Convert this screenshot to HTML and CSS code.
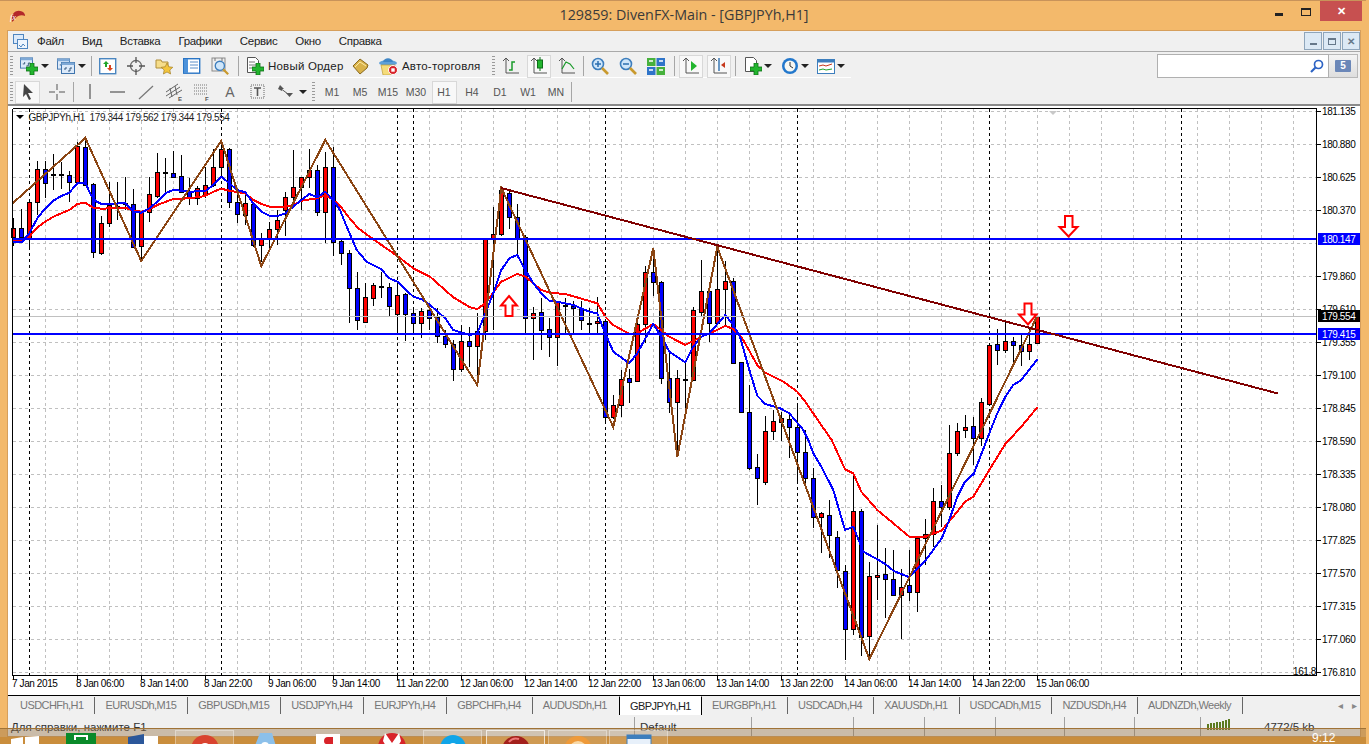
FILE: index.html
```html
<!DOCTYPE html>
<html lang="ru">
<head>
<meta charset="utf-8">
<title>129859: DivenFX-Main - [GBPJPYh,H1]</title>
<link rel="stylesheet" href="styles.css">
</head>
<body>
<svg class="defs" width="0" height="0">
  <symbol id="plus" viewBox="0 0 12 12"><path d="M4 0h4v4h4v4H8v4H4V8H0V4h4z" fill="#22b52e" stroke="#0d6f18" stroke-width=".8"/></symbol>
  <symbol id="win" viewBox="0 0 14 12"><rect x=".5" y=".5" width="13" height="11" fill="#dceafa" stroke="#3f74ad"/><rect x=".5" y=".5" width="13" height="2.5" fill="#7fa9d6"/><path d="M3 7h2V5M7 9h2V6h2" fill="none" stroke="#34567a"/></symbol>
  <symbol id="mag" viewBox="0 0 18 18"><circle cx="7" cy="7" r="5.5" fill="#cfe6fa" stroke="#3d7ebd" stroke-width="1.6"/><path d="M11 11l6 6" stroke="#c99a2e" stroke-width="2.6"/></symbol>
</svg>
<div class="app">
  <header class="titlebar">
    <svg class="logo" viewBox="0 0 18 14"><path d="M3 9C3 3 9 0 13 2c3 1 4 3 4 5-4-2-8 0-10 2-1 2-3 4-4 4z" fill="#b3282a"/><text x="1" y="11" class="logo-fx">fx</text></svg>
    <h1 class="title">129859: DivenFX-Main - [GBPJPYh,H1]</h1>
    <div class="winctl">
      <span class="wc-min"></span>
      <span class="wc-max"></span>
      <span class="wc-close">✕</span>
    </div>
  </header>
  <main class="client">
    <nav class="menubar">
      <svg class="menu-ico" viewBox="0 0 15 15"><rect x=".5" y=".5" width="10" height="9" fill="#dceafa" stroke="#4f86c0"/><rect x="4.5" y="5.5" width="10" height="9" fill="#eef5fd" stroke="#4f86c0"/><path d="M6 11l2 2 2-3 2 2" fill="none" stroke="#4f86c0"/></svg>
      <div class="menu-items">
        <span>Файл</span><span>Вид</span><span>Вставка</span><span>Графики</span><span>Сервис</span><span>Окно</span><span>Справка</span>
      </div>
      <div class="mdi">
        <span class="mdi-btn"><i class="mdi-min"></i></span>
        <span class="mdi-btn"><i class="mdi-rest"></i></span>
        <span class="mdi-btn mdi-x">✕</span>
      </div>
    </nav>
    <div class="toolbar row1">
      <span class="grip"></span>
      <span class="btn"><svg class="ic" viewBox="0 0 18 18"><use href="#win" width="13" height="12" y="0"/><use href="#plus" x="6" y="6" width="12" height="12"/></svg></span>
      <span class="dd"></span>
      <span class="btn m5"><svg class="ic" viewBox="0 0 18 18"><use href="#win" width="13" height="12" y="1"/><use href="#win" x="4" y="5" width="14" height="12"/></svg></span>
      <span class="dd"></span>
      <span class="sep s-a"></span>
      <span class="btn b-a"><svg class="ic" viewBox="0 0 18 18"><rect x=".7" y="1.7" width="16" height="15" fill="#fff" stroke="#4a86c0" stroke-width="1.4"/><path d="M7 4l3 3H8v3H6V7H4z" fill="#1fa52a"/><path d="M11 14l-3-3h2V8h2v3h2z" fill="#d9431f"/></svg></span>
      <span class="btn"><svg class="ic" viewBox="0 0 18 18"><circle cx="9" cy="9" r="5.5" fill="none" stroke="#6b6b6b" stroke-width="1.3"/><path d="M9 0v6M9 12v6M0 9h6M12 9h6" stroke="#555" stroke-width="1.3"/></svg></span>
      <span class="btn"><svg class="ic" viewBox="0 0 18 18"><path d="M1 3h5l1 2h6v6H1z" fill="#f6dd8a" stroke="#b08f3a"/><path d="M12 6l1.800 3.800 4 .5-3 2.700.8 4-3.600-2-3.600 2 .8-4-3-2.700 4-.5z" fill="#f3c53c" stroke="#a4802a" stroke-width=".7"/></svg></span>
      <span class="btn"><svg class="ic" viewBox="0 0 18 18"><rect x=".7" y="1.700" width="16" height="14.500" fill="#fff" stroke="#2a75c5" stroke-width="1.400"/><rect x="1" y="2" width="4" height="14" fill="#4d92da"/><path d="M7 5h8M7 8h8M7 11h8" stroke="#5a8ec8"/></svg></span>
      <span class="btn"><svg class="ic" viewBox="0 0 18 18"><rect x="1" y="1" width="13" height="13" fill="#eee" stroke="#8a8a8a"/><path d="M4 1v3M11 1v3" stroke="#777"/><use href="#mag" x="3" y="3" width="15" height="15"/></svg></span>
      <span class="sep s-b"></span>
      <span class="btn b-b"><svg class="ic" viewBox="0 0 18 18"><path d="M1.500.5h8l3 3v12h-11z" fill="#fff" stroke="#555"/><path d="M3 5h6M3 8h7M3 11h4" stroke="#777"/><use href="#plus" x="6" y="6" width="12" height="12"/></svg></span>
      <span class="tb-label">Новый Ордер</span>
      <span class="btn b-c"><svg class="ic" viewBox="0 0 18 18"><path d="M1 9l7-7 8 6-1 3-7 6z" fill="#d9b24a" stroke="#8a6a1e"/><path d="M3 10l5-5 6 4" fill="none" stroke="#fbeaa6"/></svg></span>
      <span class="btn"><svg class="ic ic-hat" viewBox="0 0 20 18"><ellipse cx="9" cy="6" rx="9" ry="3" fill="#5ea0d8"/><path d="M4 5c1-5 9-5 10 0z" fill="#3f86c6"/><path d="M2 8h14v7l-5 3H4z" fill="#f5dc7a" stroke="#bd9c36" stroke-width=".7"/><circle cx="14" cy="13" r="4.500" fill="#d8232a" stroke="#fff"/><rect x="12.300" y="11.300" width="3.400" height="3.400" fill="#fff"/></svg></span>
      <span class="tb-label lbl2">Авто-торговля</span>
      <span class="grip g2"></span>
      <span class="btn"><svg class="ic" viewBox="0 0 18 18"><path d="M4 1v15h13" fill="none" stroke="#555"/><path d="M1 4l3-3 3 3" fill="none" stroke="#555"/><path d="M7 13h3V5h3" fill="none" stroke="#1a9a2a" stroke-width="1.500"/></svg></span>
      <span class="btn on"><svg class="ic" viewBox="0 0 18 18"><path d="M4 1v15h13" fill="none" stroke="#555"/><path d="M1 4l3-3 3 3" fill="none" stroke="#555"/><path d="M10 0v14" stroke="#0d6f18"/><rect x="7.500" y="3" width="5" height="8" fill="#22b52e" stroke="#0d6f18"/></svg></span>
      <span class="btn"><svg class="ic" viewBox="0 0 18 18"><path d="M4 1v15h13" fill="none" stroke="#555"/><path d="M1 4l3-3 3 3" fill="none" stroke="#555"/><path d="M4 12l4-7 4 2 4 5" fill="none" stroke="#1a9a2a" stroke-width="1.200"/></svg></span>
      <span class="sep s-c"></span>
      <span class="btn m0"><svg class="ic" viewBox="0 0 18 18"><use href="#mag" width="18" height="18"/><path d="M4 7h6M7 4v6" stroke="#2d6fb0" stroke-width="1.500"/></svg></span>
      <span class="btn"><svg class="ic" viewBox="0 0 18 18"><use href="#mag" width="18" height="18"/><path d="M4 7h6" stroke="#2d6fb0" stroke-width="1.500"/></svg></span>
      <span class="btn"><svg class="ic" viewBox="0 0 18 18"><rect y="1" width="8.500" height="8" fill="#47b13c"/><rect x="9.500" y="1" width="8.500" height="8" fill="#2f74c9"/><rect y="10" width="8.500" height="8" fill="#2f74c9"/><rect x="9.500" y="10" width="8.500" height="8" fill="#47b13c"/><path d="M2 4h4M12 4h4M2 13h4M12 13h4" stroke="#fff" stroke-width="1.500"/></svg></span>
      <span class="sep s-e"></span>
      <span class="btn on m0"><svg class="ic" viewBox="0 0 18 18"><path d="M4 1v15h13" fill="none" stroke="#555"/><path d="M1 4l3-3 3 3" fill="none" stroke="#555"/><path d="M9 4l6 5-6 5z" fill="#22b52e"/></svg></span>
      <span class="btn on"><svg class="ic" viewBox="0 0 18 18"><path d="M4 1v15h13" fill="none" stroke="#555"/><path d="M1 4l3-3 3 3" fill="none" stroke="#555"/><path d="M9 1v13" stroke="#2d6fb0" stroke-width="1.400"/><path d="M11 8l4-3v6z" fill="#c6391d"/></svg></span>
      <span class="sep s-d"></span>
      <span class="btn m0"><svg class="ic" viewBox="0 0 18 18"><path d="M1.500.5h8l3 3v11h-11z" fill="#fff" stroke="#555"/><use href="#plus" x="6" y="6" width="12" height="12"/></svg></span>
      <span class="dd dd-n"></span>
      <span class="btn m0"><svg class="ic" viewBox="0 0 18 18"><circle cx="9" cy="9" r="8" fill="#2277cc"/><circle cx="9" cy="9" r="5.500" fill="#f7f7f2"/><path d="M9 5v4l3 2" fill="none" stroke="#333"/></svg></span>
      <span class="dd dd-n"></span>
      <span class="btn m0"><svg class="ic" viewBox="0 0 18 18"><rect x=".5" y="2.500" width="17" height="14" fill="#fff" stroke="#3d7ebd"/><rect x=".5" y="2.500" width="17" height="3" fill="#3d7ebd"/><path d="M2 9l4-1 3 1 6-2" fill="none" stroke="#c6391d"/><path d="M2 13l4-1 3 1 6-1" fill="none" stroke="#22a52e"/></svg></span>
      <span class="dd dd-n"></span>
      <div class="search">
        <svg class="search-ico" viewBox="0 0 14 14"><circle cx="8.500" cy="5.500" r="4" fill="#fff" stroke="#2d63c4" stroke-width="1.700"/><path d="M5.500 8.500L1 13" stroke="#2d63c4" stroke-width="2.200"/></svg>
      </div>
      <div class="msg"><span class="msg-num">5</span></div>
    </div>
    <div class="toolbar row2">
      <span class="grip"></span>
      <span class="tool on cur"><svg class="ic" viewBox="0 0 18 18"><path d="M5 1l9 9h-5l3 6-2 1-3-6-3 3z" fill="#444"/></svg></span>
      <span class="tool"><svg class="ic" viewBox="0 0 18 18"><path d="M9 1v6M9 11v6M1 9h6M11 9h6" stroke="#555"/></svg></span>
      <span class="sep s-r"></span>
      <span class="tool"><svg class="ic" viewBox="0 0 18 18"><path d="M9 1v15" stroke="#555" stroke-width="1.200"/></svg></span>
      <span class="tool"><svg class="ic" viewBox="0 0 18 18"><path d="M1 9h15" stroke="#555" stroke-width="1.200"/></svg></span>
      <span class="tool"><svg class="ic" viewBox="0 0 18 18"><path d="M2 16L16 3" stroke="#777" stroke-width="1.200"/></svg></span>
      <span class="tool"><svg class="ic" viewBox="0 0 18 18"><path d="M1 13L15 4M1 9L13 1M4 15L17 7" stroke="#666"/><path d="M5 5l2 9M10 3l2 9" stroke="#666"/><text x="13" y="17.500" class="ic-letter">E</text></svg></span>
      <span class="tool"><svg class="ic" viewBox="0 0 18 18"><path d="M1 2h14M1 5h14M1 8h14M1 11h14" stroke="#777" stroke-dasharray="1 1"/><text x="12" y="17.500" class="ic-letter">F</text></svg></span>
      <span class="tool tool-a">A</span>
      <span class="tool"><svg class="ic" viewBox="0 0 18 18"><rect x="2" y="2" width="13" height="13" fill="none" stroke="#666" stroke-dasharray="1 1"/><path d="M5 5h7M8.500 5v8" stroke="#555" stroke-width="1.600"/></svg></span>
      <span class="tool"><svg class="ic" viewBox="0 0 18 18"><path d="M3 2l4 4H1zM1 6h4v2zM9 10h7l-3.500 4z" fill="#555"/><path d="M3 5l8 6" stroke="#555"/></svg></span>
      <span class="dd d-r2"></span>
      <span class="grip g3"></span>
      <span class="tf">M1</span><span class="tf">M5</span><span class="tf">M15</span><span class="tf">M30</span><span class="tf on">H1</span><span class="tf">H4</span><span class="tf">D1</span><span class="tf">W1</span><span class="tf">MN</span>
      <span class="sep s-end"></span>
    </div>
    <svg id="chart" class="chart" viewBox="8 106 1352 589" width="1352" height="589"></svg>
    <div class="tabs">
      <span class="tab">USDCHFh,H1</span><span class="tab">EURUSDh,M15</span><span class="tab">GBPUSDh,M15</span><span class="tab">USDJPYh,H4</span><span class="tab">EURJPYh,H4</span><span class="tab">GBPCHFh,H4</span><span class="tab last">AUDUSDh,H1</span><span class="tab active">GBPJPYh,H1</span><span class="tab">EURGBPh,H1</span><span class="tab">USDCADh,H4</span><span class="tab">XAUUSDh,H1</span><span class="tab">USDCADh,M15</span><span class="tab">NZDUSDh,H4</span><span class="tab">AUDNZDh,Weekly</span>
      <span class="tab-arrows"><i>◂</i><i>▸</i></span>
    </div>
    <footer class="status">
      <span class="st st-help">Для справки, нажмите F1</span>
      <span class="st st-default">Default</span>
      <span class="st w102"></span><span class="st w71"></span><span class="st w71"></span><span class="st w69"></span><span class="st w70"></span><span class="st w66"></span>
      <span class="st st-meter"><svg class="meter" viewBox="0 0 24 12"><path d="M1 12V6M4 12V5M7 12V5M10 12V4M13 12V4M16 12V3M19 12V2M22 12V1" stroke="#5c7a1e" stroke-width="2"/></svg></span>
      <span class="st st-kb">4772/5 kb</span>
    </footer>
  </main>
  <div class="taskbar">
    <span class="tk-item tk-start"><svg viewBox="0 0 28 20"><path d="M0 3l12-2v8H0zM14 1l14-1v9H14zM0 11h12v8H0zM14 11h14v9H14z" fill="#fff"/></svg></span>
    <span class="tk-item tk-store"><svg viewBox="0 0 30 20"><rect width="30" height="20" fill="#0a8a2a"/><path d="M9 7V3h12v4" fill="none" stroke="#fff" stroke-width="2"/></svg></span>
    <span class="tk-item tk-word"><svg viewBox="0 0 30 20"><rect x="10" y="2" width="20" height="18" fill="#fff"/><path d="M0 3l16-3v20H0z" fill="#2b579a"/></svg></span>
    <span class="tk-box tk-chrome"><svg viewBox="0 0 30 20"><circle cx="15" cy="15" r="14" fill="#d9432f"/><path d="M15 15L28 10a14 14 0 0 1 0 12z" fill="#f6c92c"/><circle cx="15" cy="15" r="6" fill="#fff"/><circle cx="15" cy="15" r="4.500" fill="#4d8be8"/></svg></span>
    <span class="tk-item tk-ie"><svg viewBox="0 0 30 20"><path d="M10 0h12l6 20H2z" fill="#8cc0ea"/><circle cx="15" cy="13" r="4" fill="#fff"/></svg></span>
    <span class="tk-item tk-ya"><svg viewBox="0 0 30 20"><path d="M3 2h24v18H3z" fill="#fff"/><path d="M20 5h-5c-3 0-4 2-4 4s1 3 2 3l-3 6h2l3-6h3v6h2z" fill="#d8232a"/></svg></span>
    <span class="tk-item tk-yb"><svg viewBox="0 0 30 20"><circle cx="15" cy="14" r="14" fill="#d8232a"/><path d="M8 0l7 10 7-10 2 8-7 12h-4L6 8z" fill="#fff"/></svg></span>
    <span class="tk-box tk-skype"><svg viewBox="0 0 30 20"><circle cx="15" cy="14" r="13" fill="#10a5e8"/><circle cx="15" cy="14" r="5" fill="#fff"/></svg></span>
    <span class="tk-box tk-active"><svg viewBox="0 0 30 20"><circle cx="15" cy="16" r="14" fill="#a3201c"/><path d="M8 8a9 9 0 0 1 10-3" fill="none" stroke="#e77" stroke-width="2"/></svg></span>
    <span class="tk-box tk-orange"><svg viewBox="0 0 30 20"><circle cx="15" cy="16" r="14" fill="#ee9a3a"/><circle cx="15" cy="16" r="9" fill="#f8d9a8"/></svg></span>
    <span class="tk-box tk-app"><svg viewBox="0 0 30 20"><rect x="3" y="1" width="24" height="19" fill="#e7f0fa" stroke="#3d7ebd"/><rect x="3" y="1" width="24" height="4" fill="#3d7ebd"/></svg></span>
    <span class="clock">9:12</span>
  </div>
</div>
<script src="chart.js"></script>
</body>
</html>
```
FILE: styles.css
```css
* { box-sizing: border-box; }
html, body { margin: 0; padding: 0; height: 100%; overflow: hidden; background: #f3b96b; }
body { font-family: "Liberation Sans", Arial, sans-serif; font-size: 12px; color: #222; }
.defs { position: absolute; }
.app { position: relative; width: 1366px; height: 744px; overflow: hidden; background: #f3b96b; border-top: 1px solid #c8935a; display: flex; flex-direction: column; }

.titlebar { height: 30px; flex: none; display: flex; align-items: center; position: relative; }
.logo { width: 17px; height: 14px; margin-left: 9px; }
.logo-fx { font: italic 9px "Liberation Serif", serif; fill: #fff; }
.title { position: absolute; left: 0; top: 4px; width: 1368px; margin: 0; text-align: center; font: 400 14.300px/20px "Open Sans", sans-serif; color: #3a3a3a; }
.winctl { position: absolute; right: 4px; top: 0; display: flex; align-items: flex-start; }
.wc-min { width: 8px; height: 3px; background: #222; margin: 12px 18px 0 0; }
.wc-max { width: 10px; height: 8px; border: 1px solid #222; border-top-width: 2px; margin: 7px 9px 0 0; }
.wc-close { width: 42px; height: 20px; background: #c75050; color: #fff; text-align: center; font-size: 11px; line-height: 20px; font-weight: 700; }

.client { margin: 0 6px 0 8px; width: 1352px; height: 705px; flex: none; background: #f0f0f0; display: flex; flex-direction: column; outline: 1px solid #d69f5c; }

.menubar { height: 21px; flex: none; display: flex; align-items: center; border-bottom: 1px solid #a9a9a9; padding-left: 5px; position: relative; }
.menu-ico { width: 15px; height: 15px; }
.menu-items { display: flex; gap: 18px; margin-left: 9px; font-size: 11.500px; letter-spacing: -.32px; color: #222; }
.mdi { margin-left: auto; display: flex; gap: 1px; }
.mdi-btn { width: 18px; height: 18px; background: #dce9f5; border: 1px solid #8ea5bb; display: flex; align-items: center; justify-content: center; color: #66788a; font-size: 10px; font-weight: 700; }
.mdi-min { width: 7px; height: 2px; background: #66788a; margin-top: 6px; }
.mdi-rest { width: 8px; height: 7px; border: 1px solid #66788a; border-top-width: 2px; }

.toolbar { display: flex; align-items: center; flex: none; padding-left: 2px; }
.row1 { height: 26px; padding-top: 2px; background: linear-gradient(#fff, #fff) no-repeat 0 100% / 843px 1px; }
.row2 { height: 28px; padding-top: 2px; border-bottom: 2px solid #8a8a8a; }
.grip { width: 3px; height: 20px; background: repeating-linear-gradient(#9a9a9a 0 1px, transparent 1px 3px); flex: none; }
.g2 { margin-left: 10px; }
.g3 { margin-left: 5px; margin-right: 3px; }
.btn { width: 24px; height: 23px; flex: none; display: flex; align-items: center; justify-content: center; margin-left: 4px; }
.btn.on, .tool.on, .tf.on { background: #f8f8f8; box-shadow: inset 0 0 0 1px #d8d8d8; }
.m5 { margin-left: 5px; }
.m0 { margin-left: 0; }
.b-a { margin-left: 4px; }
.b-b { margin-left: 4px; }
.b-c { margin-left: 6px; }
.ic { width: 18px; height: 18px; display: block; }
.ic-hat { width: 20px; }
.dd { width: 8px; height: 4px; flex: none; border: 4px solid transparent; border-top: 4px solid #222; border-bottom: 0; }
.dd-n { margin: 0 5.500px 0 -1px; }
.sep { width: 1px; height: 20px; background: #a6a6a6; flex: none; margin: 0 4px; }
.s-a { margin: 0 0 0 5px; }
.s-b { margin: 0 0 0 6px; }
.s-c { margin: 0 4px; }
.s-e { margin: 0 4px 0 6px; }
.s-d { margin: 0 5px 0 4px; }
.s-r { margin: 0 2px; }
.tb-label { font-size: 11.500px; letter-spacing: .2px; color: #222; margin-left: 1px; white-space: nowrap; width: 75px; flex: none; }
.lbl2 { margin-left: 1px; width: 80px; }
.search { margin-left: auto; width: 172px; height: 24px; background: #fff; border: 1px solid #b0b0b0; display: flex; align-items: center; justify-content: flex-end; padding-right: 4px; flex: none; }
.search-ico { width: 14px; height: 14px; }
.msg { width: 29px; height: 24px; flex: none; border: 1px solid #b8b8b8; border-left: 0; background: linear-gradient(#f4f4f4, #dedede); display: flex; align-items: center; justify-content: center; margin-right: 2px; }
.msg-num { width: 16px; height: 12px; background: #6b87b8; color: #fff; font-size: 10px; font-weight: 700; text-align: center; line-height: 12px; border-radius: 1px; }

.tool { width: 28px; height: 23px; flex: none; display: flex; align-items: center; justify-content: center; }
.tool.cur { width: 25px; margin: 0 3px 0 2px; }
.tool-a { font-size: 14px; color: #666; }
.d-r2 { margin-left: -1px; }
.tf { width: 28px; height: 23px; flex: none; font-size: 10.500px; color: #555; display: flex; align-items: center; justify-content: center; }
.tf.on { width: 25px; margin: 0 1.500px; }
.s-end { margin-left: 1px; }
.ic-letter { font: 700 6px "Liberation Sans", sans-serif; fill: #555; }

.chart { display: block; flex: none; width: 1352px; height: 589px; background: #fff; }
.c-grid { stroke: #c0c0c0; stroke-width: 1; stroke-dasharray: 3 3; shape-rendering: crispEdges; }
.c-sep { stroke: #000; stroke-width: 1; stroke-dasharray: 3 3; shape-rendering: crispEdges; }
.c-tick { stroke: #000; stroke-width: 1; shape-rendering: crispEdges; }
.c-wick { stroke: #000; stroke-width: 1; shape-rendering: crispEdges; }
.c-up { fill: #ff0000; stroke: #000; stroke-width: 1; shape-rendering: crispEdges; }
.c-dn { fill: #0000ff; stroke: #000; stroke-width: 1; shape-rendering: crispEdges; }
.c-ma { fill: none; stroke-width: 2; stroke-linejoin: round; shape-rendering: crispEdges; }
.c-blue { stroke: #0000ff; }
.c-red { stroke: #ff0000; }
.c-zig { fill: none; stroke: #8b4513; stroke-width: 2; shape-rendering: crispEdges; }
.c-trend { stroke: #800000; stroke-width: 2; shape-rendering: crispEdges; }
.c-hline { stroke: #0000ff; stroke-width: 2; shape-rendering: crispEdges; }
.c-bid { stroke: #c0c0c0; stroke-width: 1; shape-rendering: crispEdges; }
.c-arrow { fill: #fff; stroke: #ff0000; stroke-width: 2; stroke-linejoin: miter; }
.c-text { font: 10px "Liberation Sans", Arial, sans-serif; letter-spacing: -.4px; fill: #000; }
.c-legend { fill: #222; font-size: 10px; letter-spacing: -.42px; }
.c-white { fill: #fff; }
.c-tag-b { fill: #0000ff; }
.c-tag-k { fill: #000; }
.c-mark { fill: #c8c8c8; }
.c-tri { fill: #000; }

.tabs { height: 20px; flex: none; display: flex; align-items: center; border-top: 1px solid #000; background: #f0f0f0; padding-left: 2px; }
.tab { height: 17px; padding: 0 11px 0 10px; font-size: 11px; line-height: 17px; letter-spacing: -.56px; color: #777; border-right: 1px solid #666; white-space: nowrap; flex: none; }
.tab.last { border-right: 0; padding-right: 12px; }
.tab.active { background: #fff; color: #222; height: 20px; margin-top: -1px; border: 1px solid #000; border-top-color: #fff; padding: 0 10px; line-height: 19px; margin-bottom: -1px; }
.tab-arrows { margin-left: auto; display: flex; gap: 9px; color: #888; font-size: 10px; padding-right: 3px; }
.tab-arrows i { font-style: normal; }

.status { height: 21px; flex: none; display: flex; background: #f0f0f0; padding-top: 2px; font-size: 11.500px; color: #333; }
.st { height: 19px; border-right: 1px solid #a0a0a0; line-height: 20px; flex: none; white-space: nowrap; overflow: hidden; }
.st-help { width: 627px; padding-left: 3px; }
.st-default { width: 117px; padding-left: 5px; }
.w102 { width: 102px; }
.w71 { width: 71px; }
.w69 { width: 69px; }
.w70 { width: 70px; }
.w66 { width: 66px; }
.st-meter { width: 63px; border: 0; padding-left: 6px; }
.meter { width: 24px; height: 14px; display: block; }
.st-kb { border: 0; width: 60px; }

.taskbar { position: absolute; left: 0; right: 0; top: 727px; height: 17px; background: linear-gradient(rgba(150,115,70,.42) 8px, #c98d3c 8px); border-top: 1px solid rgba(120,90,50,.5); overflow: hidden; }
.tk-item, .tk-box { position: absolute; top: 0; display: block; }
.tk-box { top: 1px; width: 59px; height: 20px; border: 1px solid rgba(255,255,255,.35); background: rgba(255,255,255,.12); padding: 3px 14px 0; }
.tk-item svg, .tk-box svg { display: block; width: 30px; height: 20px; }
.tk-start { left: 10px; top: 7px; }
.tk-store { left: 66px; top: 4px; }
.tk-word { left: 128px; top: 5px; }
.tk-chrome { left: 175px; }
.tk-ie { left: 250px; top: 4px; }
.tk-ya { left: 313px; top: 3px; }
.tk-yb { left: 377px; top: 4px; }
.tk-skype { left: 423px; }
.tk-active { left: 486px; border-color: rgba(255,255,255,.7); }
.tk-orange { left: 548px; }
.tk-app { left: 609px; }
.clock { position: absolute; left: 1312px; top: 3px; color: #fff; font-size: 12px; line-height: 13px; }
```
FILE: chart.js
```js
(function () {
  var NS = 'http://www.w3.org/2000/svg';
  var svg = document.getElementById('chart');
  function el(name, attrs, text) {
    var n = document.createElementNS(NS, name);
    for (var k in attrs) n.setAttribute(k, attrs[k]);
    if (text != null) n.textContent = text;
    svg.appendChild(n);
    return n;
  }
  function line(x1, y1, x2, y2, cls) { return el('line', { x1: x1, y1: y1, x2: x2, y2: y2, 'class': cls }); }

  var L = 12.5, R = 1316.5, T = 108.5, B = 675.5, i;

  // horizontal grid, one per price label
  var prices = ['181.135','180.880','180.625','180.370','180.115','179.860','179.610','179.355','179.100','178.845','178.590','178.335','178.080','177.825','177.570','177.315','177.060','176.810'];
  for (i = 0; i < prices.length; i++) line(L, 111.5 + 33 * i, R, 111.5 + 33 * i, 'c-grid');

  // vertical grid
  for (i = 0; 45.5 + 32 * i < 400; i++) line(45.5 + 32 * i, T, 45.5 + 32 * i, B, 'c-grid');
  for (i = 0; 429.5 + 32 * i < R; i++) line(429.5 + 32 * i, T, 429.5 + 32 * i, B, 'c-grid');
  [29.5, 221.5, 397.5, 413.5, 605.5, 797.5, 989.5, 1181.5].forEach(function (x) { line(x, T, x, B, 'c-sep'); });

  // candles: [high, bodyTop, bodyBottom, low, colour]
  var c = [
    [218,228,237,246,'r'],[209,228,237,243,'b'],[202,202,238,249,'r'],[161,169,202,215,'r'],[161,169,183,198,'b'],
    [154,174,175,190,'b'],[162,174,175,189,'b'],[171,175,182,202,'b'],[142,146,182,185,'r'],[138,147,185,185,'b'],
    [183,184,252,258,'b'],[216,223,253,255,'r'],[182,205,223,227,'r'],[182,206,207,220,'b'],[177,203,204,210,'b'],
    [189,204,247,248,'b'],[212,212,246,260,'r'],[177,194,212,222,'r'],[153,172,196,198,'r'],[158,172,173,192,'b'],
    [151,173,177,178,'b'],[155,176,192,193,'b'],[178,192,197,205,'b'],[186,188,198,205,'r'],[167,185,195,198,'r'],
    [149,167,185,187,'r'],[140,149,167,177,'r'],[148,149,202,208,'b'],[190,202,214,223,'b'],[195,203,215,225,'r'],
    [203,204,245,247,'b'],[233,239,245,262,'r'],[222,229,238,248,'r'],[210,220,229,245,'r'],[192,197,210,236,'r'],
    [150,187,197,207,'r'],[177,177,187,210,'r'],[149,170,177,188,'r'],[165,170,212,216,'b'],[152,167,212,243,'r'],
    [147,167,242,256,'b'],[239,241,253,265,'b'],[250,253,288,323,'b'],[272,288,320,330,'b'],[283,297,322,323,'r'],
    [283,285,298,306,'r'],[272,286,287,298,'b'],[283,287,306,316,'b'],[283,295,314,333,'r'],[293,294,314,341,'b'],
    [308,313,323,333,'b'],[308,311,323,338,'r'],[308,310,318,330,'b'],[308,317,336,343,'b'],[330,336,344,348,'b'],
    [340,344,369,381,'b'],[325,341,369,372,'r'],[327,341,346,367,'b'],[313,331,346,377,'r'],[238,239,331,340,'r'],
    [207,234,239,330,'r'],[187,190,234,236,'r'],[191,193,217,229,'b'],[204,217,238,257,'b'],[235,237,318,333,'b'],
    [307,313,318,360,'r'],[298,312,330,350,'b'],[318,329,337,357,'b'],[301,302,337,366,'r'],[298,305,306,333,'b'],
    [301,306,308,333,'b'],[301,308,320,330,'b'],[308,323,324,333,'b'],[297,321,323,333,'r'],[320,321,417,423,'b'],
    [395,405,417,419,'r'],[370,379,405,417,'r'],[369,378,382,403,'b'],[320,324,381,381,'r'],[266,272,324,343,'r'],
    [252,272,282,296,'b'],[281,282,378,384,'b'],[353,378,402,413,'b'],[370,378,402,457,'r'],[363,379,380,410,'b'],
    [307,310,380,381,'r'],[260,291,312,317,'r'],[291,291,323,342,'b'],[250,289,323,323,'r'],[261,281,289,325,'r'],
    [278,281,363,364,'b'],[362,362,412,413,'b'],[385,412,468,470,'b'],[454,467,478,505,'b'],[416,431,482,485,'r'],
    [410,421,431,440,'r'],[412,418,422,441,'r'],[413,419,427,458,'b'],[403,427,452,483,'b'],[430,452,478,486,'b'],
    [468,478,517,528,'b'],[512,513,517,553,'r'],[500,515,535,558,'b'],[531,537,570,588,'b'],[565,571,629,660,'b'],
    [475,511,629,635,'r'],[509,511,637,656,'b'],[562,576,636,658,'r'],[525,575,577,600,'r'],[548,574,579,618,'b'],
    [550,579,595,596,'b'],[569,587,595,639,'r'],[550,585,592,601,'b'],[538,538,592,612,'r'],[519,534,538,565,'r'],
    [488,501,534,547,'r'],[485,501,507,527,'b'],[425,453,507,510,'r'],[423,431,453,456,'r'],[415,427,430,438,'r'],
    [417,426,438,465,'b'],[398,402,438,446,'r'],[345,345,404,404,'r'],[329,344,350,365,'b'],[320,341,350,353,'r'],
    [337,341,345,363,'b'],[333,345,351,366,'b'],[328,344,351,360,'r'],[316,316,343,343,'r']
  ];
  c.forEach(function (d, k) {
    var x = 13.5 + 8 * k;
    line(x, d[0], x, d[3], 'c-wick');
    el('rect', { x: x - 2, y: d[1] + 0.5, width: 4, height: Math.max(1, d[2] - d[1]), 'class': d[4] === 'r' ? 'c-up' : 'c-dn' });
  });

  function seg(ox, oy, a) {
    var out = [];
    for (var j = 0; j < a.length; j += 2) out.push((ox + a[j] / 3).toFixed(1) + ',' + (oy + a[j + 1] / 3).toFixed(1));
    return out;
  }
  var blue = [].concat(
    seg(0, 110, [38,397,65,397,88,370,112,325,136,295,160,272,184,258,208,248,232,220,256,217,270,250,290,275,304,282,376,280,400,305,424,308,448,295,472,275,496,250,520,240,544,242,570,245,616,243,640,225,664,200,688,220,712,240,736,247,760,280,784,305,808,317,832,318,856,310,880,290,904,270,928,252,952,262,976,245,1000,270]),
    seg(340, 170, [0,120,20,170,50,240,80,275,124,298,148,325,172,335,220,380,245,388,270,405,316,445,340,480,388,495,412,490,436,430,460,370,484,300,508,265,532,255,556,300,580,340,604,370,628,392,652,395,700,405,748,425,772,430,796,490,820,545,868,580,892,550]),
    seg(640, 230, [0,355,40,282,64,320,88,365,136,397,160,350,184,320,208,310,256,255,280,285,300,320,328,420,352,497,376,522,420,535,448,550,490,600]),
    seg(790, 440, [55,0,70,40,94,80,130,150,165,270,190,260,220,335,262,358,286,372,310,392,358,412,406,362,455,295,478,240,502,170,525,125,550,100]),
    seg(930, 290, [130,555,178,430,202,370,226,320,250,285,274,270,322,208])
  );
  var red = [].concat(
    seg(0, 110, [38,393,65,393,88,380,112,352,136,335,160,320,184,310,208,300,232,282,256,278,280,293,304,296,376,293,400,302,424,305,448,298,472,285,520,267,568,265,616,258,640,245,664,236,688,242,736,250,760,270,784,282,808,290,850,291,880,285,904,272,952,265,976,255,1000,270]),
    seg(340, 170, [0,107,25,140,55,175,100,208,172,258,220,295,270,320,340,382,390,412,412,417,436,400,484,335,532,312,556,320,604,360,628,368,676,372,772,400,796,440,820,465,868,492,892,492]),
    seg(640, 230, [0,305,40,282,88,320,136,345,184,320,232,300,256,287,280,297,304,320,352,405,376,428,430,455,472,485,496,515,540,580]),
    seg(790, 440, [125,0,165,88,190,100,214,155,262,210,310,250,358,290,406,290,454,272,502,215,525,185,550,170,598,90]),
    seg(930, 290, [226,462,274,410,322,352])
  );
  el('polyline', { points: red.join(' '), 'class': 'c-ma c-red' });
  el('polyline', { points: blue.join(' '), 'class': 'c-ma c-blue' });

  el('polyline', { points: '13,203 85.3,138 141.3,261 221.3,141 261.3,266 325.3,140 477.3,385 501.3,188 613.3,427 653.3,248 677.3,457 717.3,247 869.3,659 1037.3,316', 'class': 'c-zig' });

  line(L, 316.5, R, 316.5, 'c-bid');
  line(L, 239, R, 239, 'c-hline');
  line(L, 334, R, 334, 'c-hline');
  line(501, 188, 1278, 393.5, 'c-trend');

  // arrows
  el('path', { d: 'M509 296l8 9.500h-4.500V316h-7V305.500H501z', 'class': 'c-arrow' });
  el('path', { d: 'M1065 216h7.500v11h5l-9 9.500-9-9.500h5.500z', 'class': 'c-arrow' });
  el('path', { d: 'M1024.500 303.500h7v11h5l-8.500 10-9-10h5.500z', 'class': 'c-arrow' });
  el('path', { d: 'M1049 111h8l-4 4z', 'class': 'c-mark' });

  // frame and axes
  line(L, T, 1317, T, 'c-tick');
  line(L, T, L, B, 'c-tick');
  line(R, T, R, B, 'c-tick');
  line(L, B, R, B, 'c-tick');

  // price scale
  prices.forEach(function (p, idx) {
    var y = 111.5 + 33 * idx;
    if (p === '180.115') return;
    line(R, y, R + 4, y, 'c-tick');
    el('text', { x: 1322, y: y + 3.5, 'class': 'c-text' }, p);
  });
  [[233, 'c-tag-b', '180.147'], [328, 'c-tag-b', '179.415'], [310, 'c-tag-k', '179.554']].forEach(function (t) {
    el('rect', { x: 1318, y: t[0], width: 42, height: 12, 'class': t[1] });
    el('text', { x: 1322, y: t[0] + 9.500, 'class': 'c-text c-white' }, t[2]);
  });
  el('text', { x: 1293, y: 675, 'class': 'c-text' }, '161.8');
  line(L, B, R, B, 'c-tick');
  el('rect', { x: 1285, y: 676, width: 31, height: 6, 'class': 'c-white' });

  // time scale
  var times = ['7 Jan 2015','8 Jan 06:00','8 Jan 14:00','8 Jan 22:00','9 Jan 06:00','9 Jan 14:00','11 Jan 22:00','12 Jan 06:00','12 Jan 14:00','12 Jan 22:00','13 Jan 06:00','13 Jan 14:00','13 Jan 22:00','14 Jan 06:00','14 Jan 14:00','14 Jan 22:00','15 Jan 06:00'];
  times.forEach(function (t, idx) {
    var x = 13 + 64 * idx;
    line(x + .5, B, x + .5, B + 4, 'c-tick');
    el('text', { x: x - 1, y: 687, 'class': 'c-text' }, t);
  });

  // legend
  el('path', { d: 'M16 115h8l-4 4z', 'class': 'c-tri' });
  var leg = el('text', { x: 28.5, y: 120.5, 'class': 'c-text c-legend' }, 'GBPJPYh,H1  179.344 179.562 179.344 179.554');
  leg.style.whiteSpace = 'pre';
})();
```
